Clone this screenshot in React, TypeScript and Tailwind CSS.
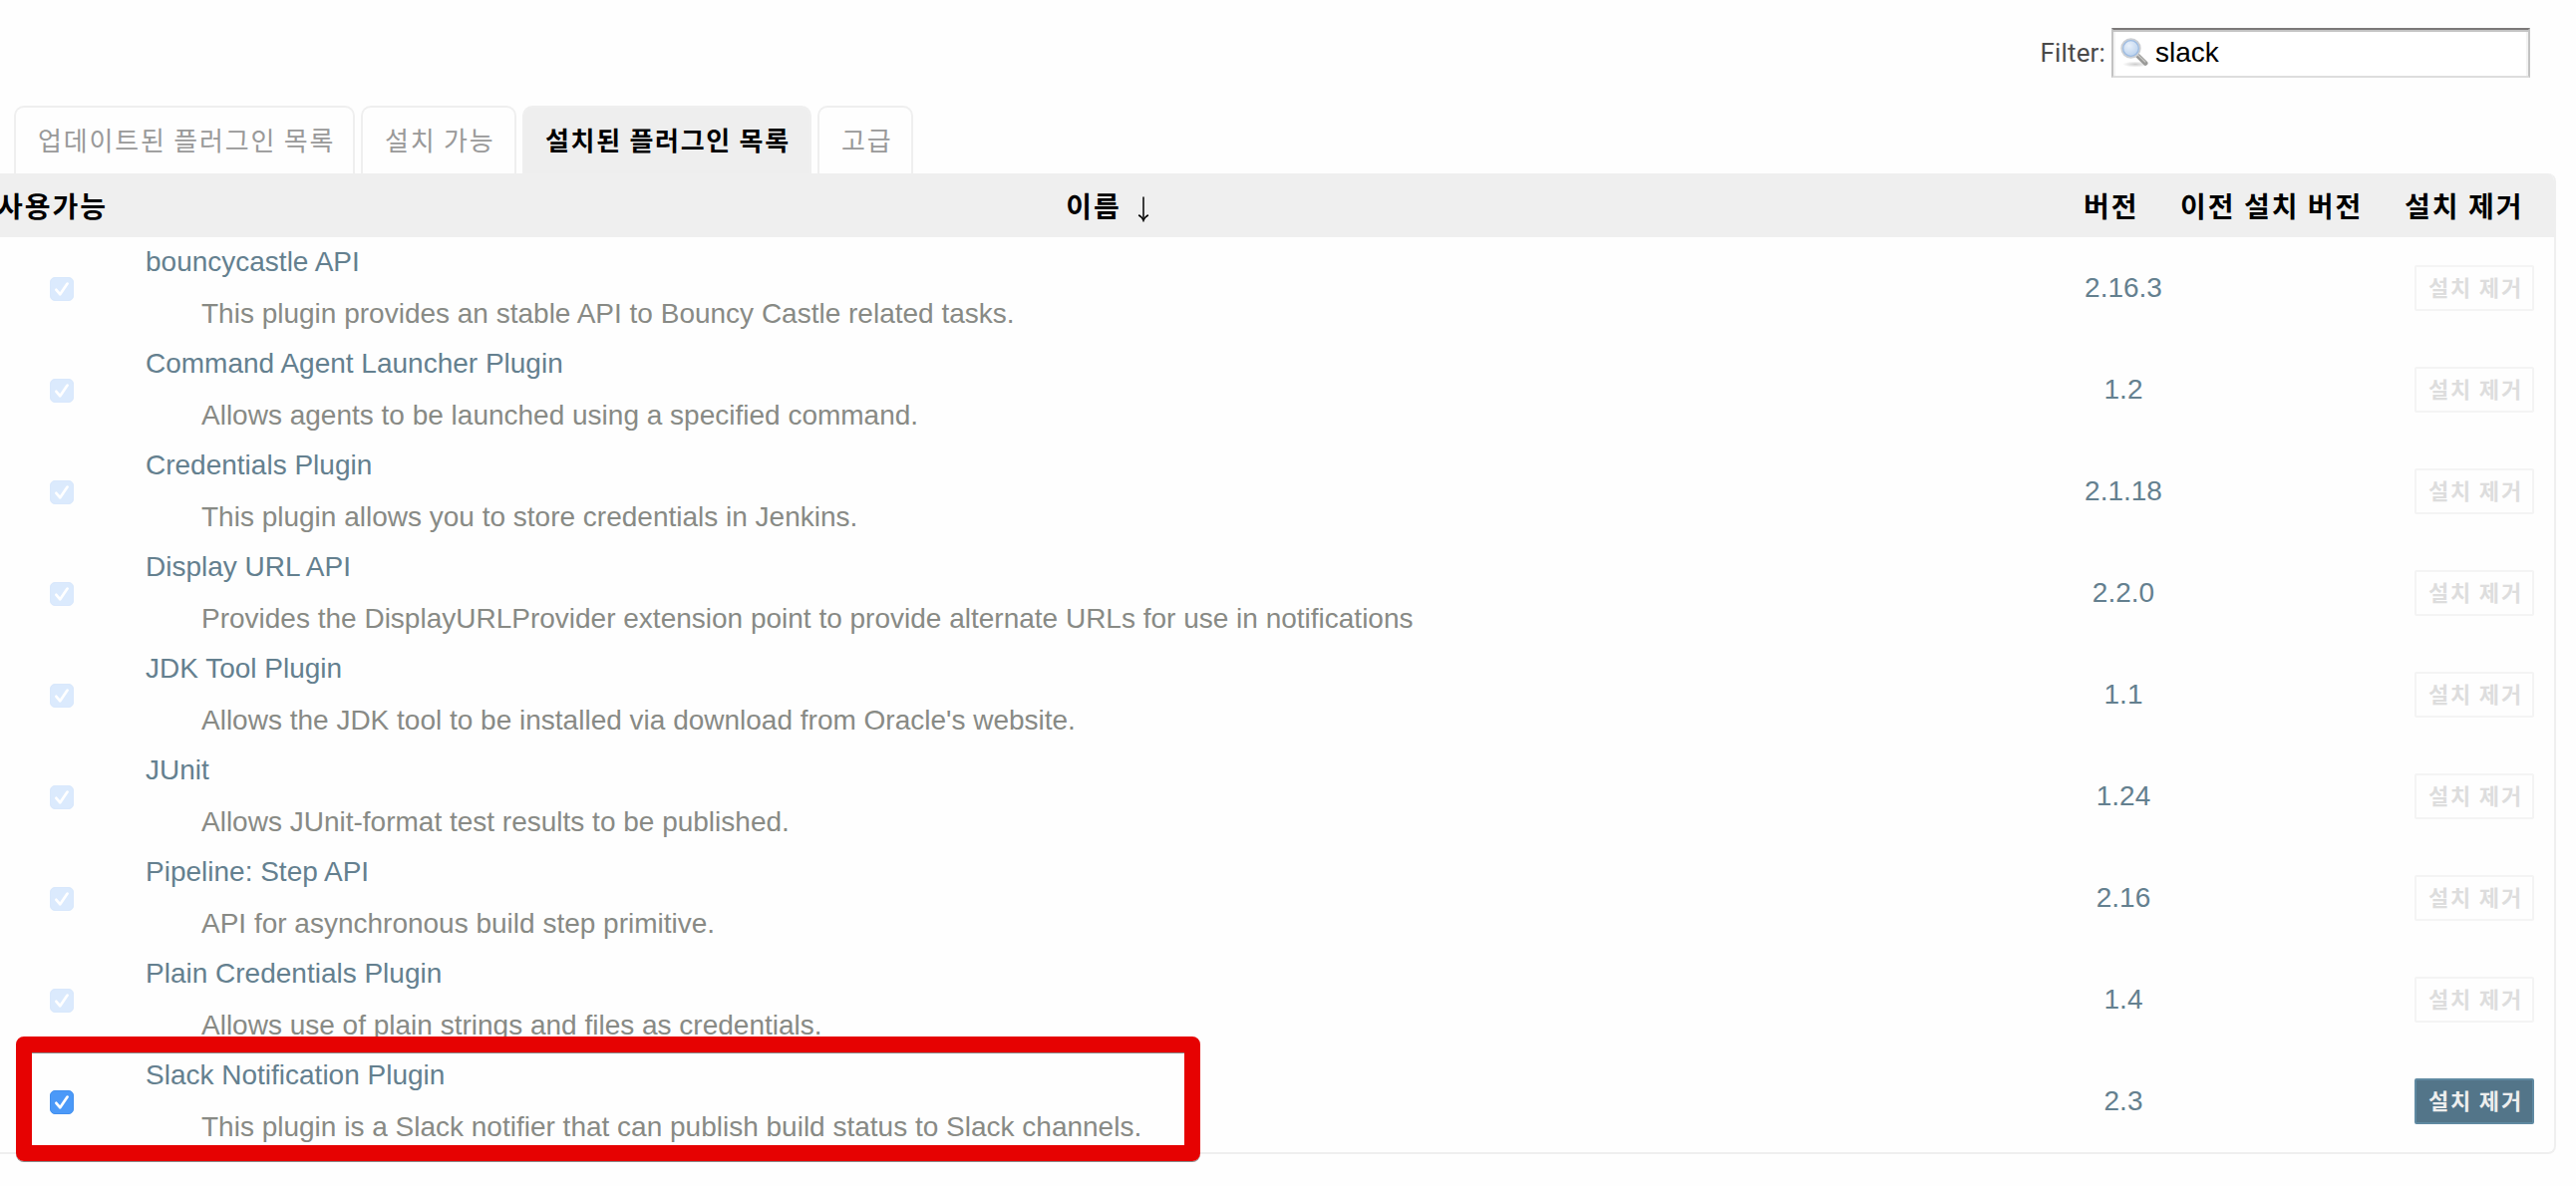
type Plugin = { name: string; description: string; version: string; removable?: boolean };

const plugins: Plugin[] = [
  { name: 'bouncycastle API', description: 'This plugin provides an stable API to Bouncy Castle related tasks.', version: '2.16.3' },
  { name: 'Command Agent Launcher Plugin', description: 'Allows agents to be launched using a specified command.', version: '1.2' },
  { name: 'Credentials Plugin', description: 'This plugin allows you to store credentials in Jenkins.', version: '2.1.18' },
  { name: 'Display URL API', description: 'Provides the DisplayURLProvider extension point to provide alternate URLs for use in notifications', version: '2.2.0' },
  { name: 'JDK Tool Plugin', description: "Allows the JDK tool to be installed via download from Oracle's website.", version: '1.1' },
  { name: 'JUnit', description: 'Allows JUnit-format test results to be published.', version: '1.24' },
  { name: 'Pipeline: Step API', description: 'API for asynchronous build step primitive.', version: '2.16' },
  { name: 'Plain Credentials Plugin', description: 'Allows use of plain strings and files as credentials.', version: '1.4' },
  { name: 'Slack Notification Plugin', description: 'This plugin is a Slack notifier that can publish build status to Slack channels.', version: '2.3', removable: true },
];

const tabs = [
  { label: '업데이트된 플러그인 목록', width: 'w-[342px]' },
  { label: '설치 가능', width: 'w-[156px]' },
  { label: '설치된 플러그인 목록', width: 'w-[290px]', active: true },
  { label: '고급', width: 'w-[96px]' },
];

function SearchIcon() {
  return (
    <svg width="28" height="32" viewBox="0 0 28 32" className="shrink-0">
      <defs>
        <radialGradient id="lens" cx="0.4" cy="0.35" r="0.7">
          <stop offset="0" stopColor="#e9f1fb" />
          <stop offset="1" stopColor="#b4cdeb" />
        </radialGradient>
        <radialGradient id="shade">
          <stop offset="0" stopColor="#000" stopOpacity="0.2" />
          <stop offset="1" stopColor="#000" stopOpacity="0" />
        </radialGradient>
      </defs>
      <ellipse cx="15" cy="27.5" rx="13" ry="3" fill="url(#shade)" />
      <path d="M17 18.5 L25.2 26.5" stroke="#9a9a98" strokeWidth="4.6" strokeLinecap="round" />
      <path d="M18 18.5 L24.8 25" stroke="#c4c4c2" strokeWidth="1.4" strokeLinecap="round" />
      <circle cx="10.5" cy="11.5" r="9.2" fill="url(#lens)" stroke="#cdd0d4" strokeWidth="2" />
      <circle cx="10.5" cy="11.5" r="7.8" fill="none" stroke="#9dbce2" strokeWidth="1.3" />
    </svg>
  );
}

function Checkbox({ enabled }: { enabled?: boolean }) {
  return (
    <span
      role="checkbox"
      aria-checked="true"
      className={`flex size-6 items-center justify-center rounded-[5px] border ${
        enabled ? 'border-[#4390ee] bg-[#4b99f8]' : 'border-[#d9e8fc] bg-[#dbeafd]'
      }`}
    >
      <svg width="24" height="24" viewBox="0 0 24 24" className="shrink-0">
        <path d="M6.4 12.8 L10.3 17.3 L17.6 6.6" fill="none" stroke="#fff" strokeWidth="2.7" strokeLinecap="round" strokeLinejoin="round" />
      </svg>
    </span>
  );
}

function SortArrow() {
  return (
    <svg width="12" height="26" viewBox="0 0 12 26" className="shrink-0">
      <path d="M6 0.5 V23.5" stroke="#000" strokeWidth="1.5" fill="none" />
      <path d="M1.2 18.7 Q4.6 20.6 6 24 Q7.4 20.6 10.8 18.7" stroke="#000" strokeWidth="1.8" fill="none" />
    </svg>
  );
}

function UninstallButton({ enabled }: { enabled?: boolean }) {
  return (
    <button
      disabled={!enabled}
      className={`flex h-[46px] w-[120px] items-start rounded-[2px] border-2 pt-[3px] pl-3 font-['Noto_Sans_CJK_KR',sans-serif] text-[22px] leading-8 font-bold tracking-[1.8px] whitespace-nowrap ${
        enabled ? 'border-[#5f89a1] bg-[#537589] text-[#eeeeee]' : 'border-[#f4f4f4] text-[#dddddd]'
      }`}
    >
      설치 제거
    </button>
  );
}

function PluginRow({ plugin }: { plugin: Plugin }) {
  return (
    <div className="grid h-[102px] grid-cols-[146px_1929px_110px_237px_140px]">
      <div className="pt-10 pl-[50px]">
        <Checkbox enabled={plugin.removable} />
      </div>
      <div className="whitespace-nowrap">
        <a className="block leading-[50px] text-[#64808f]">{plugin.name}</a>
        <p className="mt-[9px] ml-[56px] leading-9 text-[#888a85]">{plugin.description}</p>
      </div>
      <div className="text-center leading-[102px] text-[#64808f]">{plugin.version}</div>
      <div />
      <div className="pt-7">
        <UninstallButton enabled={plugin.removable} />
      </div>
    </div>
  );
}

export default function App() {
  return (
    <div className="relative h-[1190px] w-[2584px] overflow-hidden bg-[#fefefe] font-['Liberation_Sans','Noto_Sans_CJK_KR',sans-serif] text-[28px]">
      <div className="flex h-[106px] items-start justify-end pt-7 pr-[46px]">
        <label className="mr-[6px] font-['Roboto',sans-serif] text-[26px] leading-[50px] tracking-[0.15px] text-[#4a4a4a]">Filter:</label>
        <div className="flex h-[50px] w-[420px] items-center border-2 border-t-[#7b7979] border-r-[#c3c3c3] border-b-[#dddddd] border-l-[#c3c3c3] bg-white pl-[7px] shadow-[inset_0_2px_0_#c4c4c4,inset_2px_0_0_#f3f3f3,inset_-2px_0_0_#f3f3f3]">
          <SearchIcon />
          <span className="ml-[7px] leading-[46px] text-black">slack</span>
        </div>
      </div>

      <div className="flex h-[68px] gap-[6px] pl-[14px]">
        {tabs.map((tab) => (
          <div
            key={tab.label}
            className={`${tab.width} rounded-t-[10px] border-2 border-b-0 border-[#efefef] pt-[12px] font-['Noto_Sans_CJK_KR',sans-serif] text-[26px] leading-10 whitespace-nowrap ${
              tab.active ? 'bg-[#eeeeee] pl-[21px] font-bold tracking-[1.7px] text-black' : 'pl-[22px] tracking-[1.8px] text-[#999999]'
            }`}
          >
            {tab.label}
          </div>
        ))}
      </div>

      <div className="h-[984px] w-[2564px] overflow-hidden rounded-r-[8px] border-r-2 border-b-2 border-[#efefef]">
        <div className="grid h-16 w-[2564px] grid-cols-[146px_1944px_97px_225px_152px] bg-[#efefef] font-['Noto_Sans_CJK_KR',sans-serif] leading-[64px] font-bold tracking-[2px] whitespace-nowrap text-black">
          <div className="-ml-[3px]">사용가능</div>
          <div className="flex items-start justify-center pr-[14px]">
            이름
            <span className="mt-[23px] ml-[16px]">
              <SortArrow />
            </span>
          </div>
          <div>버전</div>
          <div>이전 설치 버전</div>
          <div>설치 제거</div>
        </div>
        {plugins.map((plugin) => (
          <PluginRow key={plugin.name} plugin={plugin} />
        ))}
      </div>

      <div className="absolute top-[1040px] left-4 h-[125px] w-[1188px] rounded-[8px] border-16 border-[#e60202] shadow-[0_1px_0_#888888,inset_0_1px_0_#888888]" />
    </div>
  );
}
